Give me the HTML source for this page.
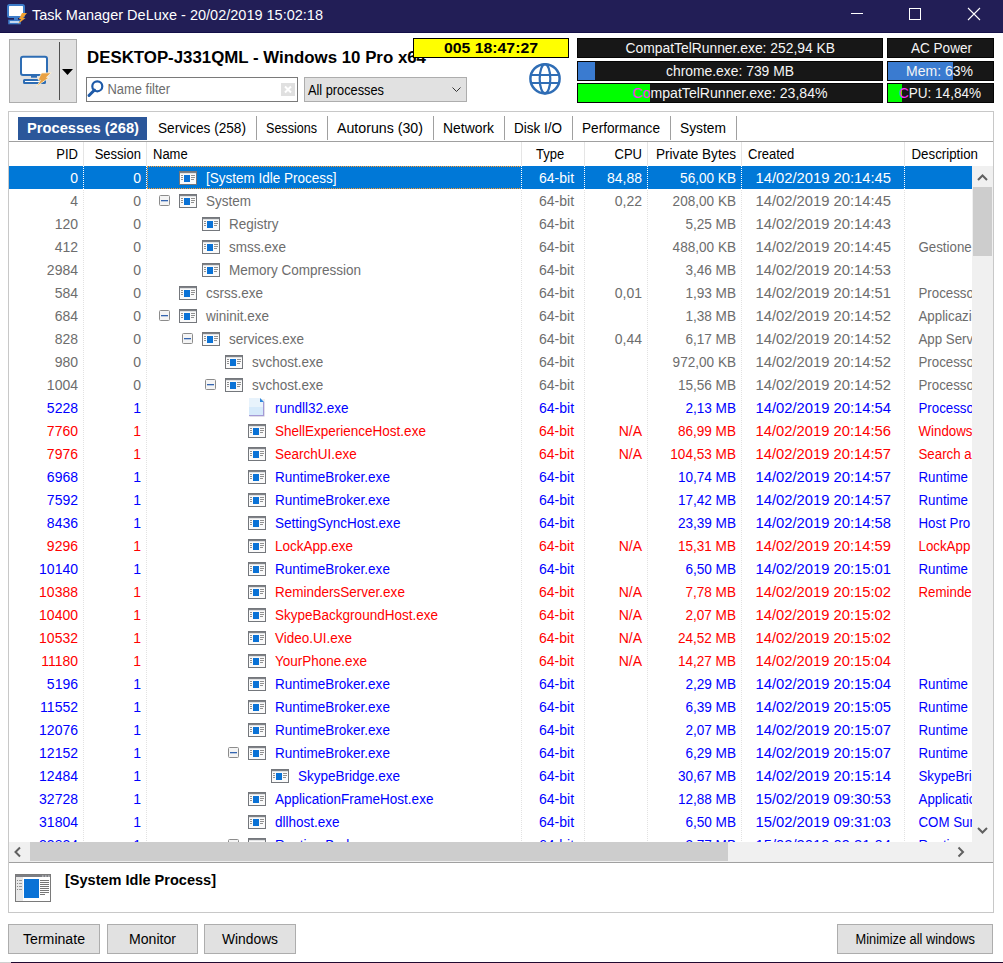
<!DOCTYPE html>
<html><head><meta charset="utf-8"><title>Task Manager DeLuxe</title>
<style>
html,body{margin:0;padding:0;background:#fff;width:1003px;height:963px;overflow:hidden}
svg{display:block}
text{font-family:"Liberation Sans",sans-serif;white-space:pre}
</style></head><body>
<svg width="1003" height="963" viewBox="0 0 1003 963" shape-rendering="auto">
<defs>
<symbol id="wi" viewBox="0 0 18 14">
<rect x="0.5" y="0.5" width="17" height="13" fill="#fafafa" stroke="#74777c"/>
<rect x="1" y="1" width="16" height="1.2" fill="#7f8287"/>
<rect x="5" y="4" width="6" height="7" fill="#0a72d6"/>
<rect x="2" y="4" width="2" height="1" fill="#909090"/><rect x="2" y="6" width="2" height="1" fill="#909090"/><rect x="2" y="8" width="2" height="1" fill="#909090"/>
<rect x="12" y="4" width="4" height="1" fill="#909090"/><rect x="12" y="6" width="4" height="1" fill="#909090"/><rect x="12" y="8" width="3" height="1" fill="#909090"/>
</symbol>
<symbol id="bx" viewBox="0 0 11 11">
<rect x="0.5" y="0.5" width="10" height="10" rx="1" fill="#f4f4f4" stroke="#8c8c8c"/>
<rect x="2" y="5" width="7" height="1.3" fill="#3465b0"/>
</symbol>
<symbol id="doc" viewBox="0 0 16 19">
<rect x="1" y="1" width="15" height="18" fill="#e4e4e4" opacity="0.6"/>
<path d="M0 0 L11 0 L15 4 L15 18 L0 18 Z" fill="#d6eafb"/>
<path d="M0 0 L11 0 L11 4 L15 4 L15 9 L0 9 Z" fill="#e8f3fc"/>
<rect x="14" y="4" width="1.2" height="14" fill="#a49ad6"/>
<rect x="0" y="17" width="15" height="1.2" fill="#a49ad6"/>
<path d="M11 0 L15 4 L11 4 Z" fill="#2f86dc"/>
</symbol>
<pattern id="doh" width="2" height="1" patternUnits="userSpaceOnUse" x="1"><rect width="1" height="1" fill="#ff9a30"/></pattern>
<pattern id="dov" width="1" height="2" patternUnits="userSpaceOnUse" y="1"><rect width="1" height="1" fill="#ff9a30"/></pattern>
<pattern id="dotg" width="1" height="2" patternUnits="userSpaceOnUse"><rect width="1" height="1" fill="#e2e2e2"/></pattern>
<pattern id="dotw" width="1" height="2" patternUnits="userSpaceOnUse"><rect width="1" height="1" fill="#ffffff"/></pattern>
<clipPath id="lc"><rect x="9" y="166" width="963" height="676"/></clipPath>
<clipPath id="dc"><rect x="905" y="166" width="67" height="676"/></clipPath>
</defs>
<rect x="0" y="0" width="1003" height="33" fill="#221e56" />
<rect x="0" y="32" width="1003" height="1" fill="#130f48" />
<g transform="translate(7,4)"><rect x="1" y="1" width="16" height="12" rx="1.5" fill="#fff" stroke="#3d7cc9" stroke-width="2"/><rect x="7" y="14" width="4" height="2" fill="#3d7cc9"/><rect x="2" y="16.5" width="11" height="3" fill="#fff" stroke="#3d7cc9" stroke-width="1.6"/><path d="M15 9 L20 9 L16 14 L18.5 14 L11 20 L14 15 L12 15 Z" fill="#f0a030"/></g>
<text x="32" y="20" font-size="15" fill="#ffffff" text-anchor="start" textLength="291" lengthAdjust="spacingAndGlyphs" style="" >Task Manager DeLuxe - 20/02/2019 15:02:18</text>
<rect x="851" y="13" width="12" height="1" fill="#fff"/>
<rect x="909.5" y="8.5" width="11" height="11" fill="none" stroke="#fff" stroke-width="1"/>
<path d="M968 8 L980 20 M980 8 L968 20" stroke="#fff" stroke-width="1.1"/>
<rect x="9.5" y="39.5" width="67" height="63" fill="#e1e1e1" stroke="#adadad" />
<rect x="59" y="42" width="1" height="58" fill="#505050" />
<path d="M62 69 L73 69 L67.5 75 Z" fill="#000"/>
<g><rect x="21" y="56.8" width="26" height="18.2" rx="2" fill="#fff" stroke="#2e6db4" stroke-width="2"/><rect x="31" y="75.5" width="6" height="2.2" fill="#2e6db4"/><rect x="24" y="80" width="21" height="3" rx="0.5" fill="#fff" stroke="#2e6db4" stroke-width="2"/><path d="M41.5 73 L51.2 72.8 L46.5 77.3 L49.2 77.5 L36.5 86.5 L40.5 80.3 L38 80 Z" fill="#e9a244" stroke="#fffbe8" stroke-width="0.7" stroke-linejoin="round"/></g>
<text x="87" y="63" font-size="16" fill="#000" text-anchor="start" textLength="339" lengthAdjust="spacingAndGlyphs" style="font-weight:bold;" >DESKTOP-J331QML - Windows 10 Pro x64</text>
<rect x="413.5" y="38.5" width="155" height="19" fill="#ffff00" stroke="#000" />
<text x="444" y="53" font-size="14" fill="#000" text-anchor="start" textLength="94" lengthAdjust="spacingAndGlyphs" style="font-weight:bold;" >005 18:47:27</text>
<rect x="86.5" y="77.5" width="211" height="24" fill="#ffffff" stroke="#7a7a7a" />
<circle cx="97.3" cy="86.3" r="5" fill="none" stroke="#1e5aa8" stroke-width="2.2"/>
<path d="M94.5 90 L89 95.5" stroke="#1e5aa8" stroke-width="3" stroke-linecap="round"/>
<text x="107.5" y="93.5" font-size="14" fill="#6d6d6d" text-anchor="start" textLength="62.5" lengthAdjust="spacingAndGlyphs" style="" >Name filter</text>
<rect x="281" y="83" width="14" height="13" fill="#e0e0e0" />
<path d="M285 86.5 L291 92.5 M291 86.5 L285 92.5" stroke="#fff" stroke-width="2"/>
<rect x="304.5" y="77.5" width="162" height="24" fill="#e1e1e1" stroke="#adadad" />
<text x="308" y="95" font-size="14" fill="#000" text-anchor="start" textLength="76" lengthAdjust="spacingAndGlyphs" style="" >All processes</text>
<path d="M452.5 87.5 L456.5 91.5 L460.5 87.5" fill="none" stroke="#333" stroke-width="1"/>
<clipPath id="gc"><circle cx="545" cy="78.8" r="14.6"/></clipPath>
<g fill="none" stroke="#2f6db5" stroke-width="2.5"><circle cx="545" cy="78.8" r="14.6"/><ellipse cx="545" cy="78.8" rx="5.3" ry="14.6" stroke-width="2.2"/><g clip-path="url(#gc)"><path d="M530 75 L560 75 M530 83 L560 83" stroke-width="2"/></g></g>
<rect x="577.5" y="38.5" width="305" height="19" fill="#171717" stroke="#050505" />
<text x="625.5" y="53" font-size="14" fill="#f5f5f5" text-anchor="start" textLength="209.5" lengthAdjust="spacingAndGlyphs" style="" >CompatTelRunner.exe: 252,94 KB</text>
<rect x="577.5" y="61.5" width="305" height="19" fill="#171717" stroke="#050505" />
<rect x="578" y="62" width="17" height="18" fill="#3a7bd0" />
<text x="666" y="76" font-size="14" fill="#f5f5f5" text-anchor="start" textLength="128" lengthAdjust="spacingAndGlyphs" style="" >chrome.exe: 739 MB</text>
<rect x="577.5" y="83.5" width="305" height="19" fill="#171717" stroke="#050505" />
<rect x="578" y="84" width="72" height="18" fill="#00ff00" />
<text x="632.5" y="98" font-size="14" textLength="195" lengthAdjust="spacingAndGlyphs"><tspan fill="#ff30ff">Co</tspan><tspan fill="#f5f5f5">mpatTelRunner.exe: 23,84%</tspan></text>
<rect x="887.5" y="38.5" width="106" height="19" fill="#171717" stroke="#050505" />
<text x="911" y="53" font-size="14" fill="#f5f5f5" text-anchor="start" textLength="61" lengthAdjust="spacingAndGlyphs" style="" >AC Power</text>
<rect x="887.5" y="61.5" width="106" height="19" fill="#171717" stroke="#050505" />
<rect x="888" y="62" width="65" height="18" fill="#3a7bd0" />
<text x="906" y="76" font-size="14" fill="#f5f5f5" text-anchor="start" textLength="67" lengthAdjust="spacingAndGlyphs" style="" >Mem: 63%</text>
<rect x="887.5" y="83.5" width="106" height="19" fill="#171717" stroke="#050505" />
<rect x="888" y="84" width="14" height="18" fill="#00ff00" />
<text x="899" y="98" font-size="14" textLength="82" lengthAdjust="spacingAndGlyphs"><tspan fill="#ff30ff">C</tspan><tspan fill="#f5f5f5">PU: 14,84%</tspan></text>
<rect x="8.5" y="111.5" width="985" height="801" fill="#ffffff" stroke="#c8c8c8" />
<rect x="9" y="141" width="984" height="1" fill="#a0a0a0" />
<rect x="18" y="117" width="129" height="23" fill="#2b579a" />
<text x="27" y="133" font-size="14" fill="#ffffff" text-anchor="start" textLength="112" lengthAdjust="spacingAndGlyphs" style="font-weight:bold;" >Processes (268)</text>
<text x="158" y="133" font-size="14" fill="#000" text-anchor="start" textLength="88" lengthAdjust="spacingAndGlyphs" style="" >Services (258)</text>
<rect x="256" y="116" width="1" height="24" fill="#a0a0a0" />
<text x="266" y="133" font-size="14" fill="#000" text-anchor="start" textLength="51" lengthAdjust="spacingAndGlyphs" style="" >Sessions</text>
<rect x="327" y="116" width="1" height="24" fill="#a0a0a0" />
<text x="337" y="133" font-size="14" fill="#000" text-anchor="start" textLength="86" lengthAdjust="spacingAndGlyphs" style="" >Autoruns (30)</text>
<rect x="433" y="116" width="1" height="24" fill="#a0a0a0" />
<text x="443" y="133" font-size="14" fill="#000" text-anchor="start" textLength="51" lengthAdjust="spacingAndGlyphs" style="" >Network</text>
<rect x="504" y="116" width="1" height="24" fill="#a0a0a0" />
<text x="514" y="133" font-size="14" fill="#000" text-anchor="start" textLength="48" lengthAdjust="spacingAndGlyphs" style="" >Disk I/O</text>
<rect x="572" y="116" width="1" height="24" fill="#a0a0a0" />
<text x="582" y="133" font-size="14" fill="#000" text-anchor="start" textLength="78" lengthAdjust="spacingAndGlyphs" style="" >Performance</text>
<rect x="670" y="116" width="1" height="24" fill="#a0a0a0" />
<text x="680" y="133" font-size="14" fill="#000" text-anchor="start" textLength="46" lengthAdjust="spacingAndGlyphs" style="" >System</text>
<rect x="736" y="116" width="1" height="24" fill="#a0a0a0" />
<rect x="9" y="142" width="964" height="24" fill="#ffffff" />
<rect x="83" y="142" width="1" height="24" fill="#e5e5e5" />
<rect x="146" y="142" width="1" height="24" fill="#e5e5e5" />
<rect x="521" y="142" width="1" height="24" fill="#e5e5e5" />
<rect x="584" y="142" width="1" height="24" fill="#e5e5e5" />
<rect x="647" y="142" width="1" height="24" fill="#e5e5e5" />
<rect x="741" y="142" width="1" height="24" fill="#e5e5e5" />
<rect x="904" y="142" width="1" height="24" fill="#e5e5e5" />
<text x="78" y="159" font-size="14" fill="#000" text-anchor="end" textLength="21.7" lengthAdjust="spacingAndGlyphs" style="" >PID</text>
<text x="141" y="159" font-size="14" fill="#000" text-anchor="end" textLength="46.3" lengthAdjust="spacingAndGlyphs" style="" >Session</text>
<text x="153" y="159" font-size="14" fill="#000" text-anchor="start" textLength="34.7" lengthAdjust="spacingAndGlyphs" style="" >Name</text>
<text x="536" y="159" font-size="14" fill="#000" text-anchor="start" textLength="28.2" lengthAdjust="spacingAndGlyphs" style="" >Type</text>
<text x="642" y="159" font-size="14" fill="#000" text-anchor="end" textLength="27.5" lengthAdjust="spacingAndGlyphs" style="" >CPU</text>
<text x="736" y="159" font-size="14" fill="#000" text-anchor="end" textLength="80" lengthAdjust="spacingAndGlyphs" style="" >Private Bytes</text>
<text x="748" y="159" font-size="14" fill="#000" text-anchor="start" textLength="46.3" lengthAdjust="spacingAndGlyphs" style="" >Created</text>
<text x="911.5" y="159" font-size="14" fill="#000" text-anchor="start" textLength="66.5" lengthAdjust="spacingAndGlyphs" style="" >Description</text>
<g clip-path="url(#lc)">
<rect x="83" y="166" width="1" height="676" fill="url(#dotg)"/>
<rect x="146" y="166" width="1" height="676" fill="url(#dotg)"/>
<rect x="521" y="166" width="1" height="676" fill="url(#dotg)"/>
<rect x="584" y="166" width="1" height="676" fill="url(#dotg)"/>
<rect x="647" y="166" width="1" height="676" fill="url(#dotg)"/>
<rect x="741" y="166" width="1" height="676" fill="url(#dotg)"/>
<rect x="904" y="166" width="1" height="676" fill="url(#dotg)"/>
<rect x="9" y="166" width="963" height="23" fill="#0078d7" />
<rect x="83" y="166" width="1" height="23" fill="url(#dotw)"/>
<rect x="146" y="166" width="1" height="23" fill="url(#dotw)"/>
<rect x="521" y="166" width="1" height="23" fill="url(#dotw)"/>
<rect x="584" y="166" width="1" height="23" fill="url(#dotw)"/>
<rect x="647" y="166" width="1" height="23" fill="url(#dotw)"/>
<rect x="741" y="166" width="1" height="23" fill="url(#dotw)"/>
<rect x="904" y="166" width="1" height="23" fill="url(#dotw)"/>
<rect x="147" y="166" width="374" height="1" fill="url(#doh)"/><rect x="147" y="188" width="374" height="1" fill="url(#doh)"/><rect x="147" y="166" width="1" height="23" fill="url(#dov)"/>
<text x="78" y="183" font-size="14" fill="#ffffff" text-anchor="end" style="" >0</text>
<text x="141" y="183" font-size="14" fill="#ffffff" text-anchor="end" style="" >0</text>
<use href="#wi" x="179" y="171" width="18" height="14"/>
<text x="206" y="183" font-size="14" fill="#ffffff" text-anchor="start" textLength="130.6" lengthAdjust="spacingAndGlyphs" style="" >[System Idle Process]</text>
<text x="539" y="183" font-size="14" fill="#ffffff" text-anchor="start" style="" >64-bit</text>
<text x="642" y="183" font-size="14" fill="#ffffff" text-anchor="end" style="" >84,88</text>
<text x="736" y="183" font-size="14" fill="#ffffff" text-anchor="end" textLength="55.9" lengthAdjust="spacingAndGlyphs" style="" >56,00 KB</text>
<text x="755.5" y="183" font-size="14" fill="#ffffff" text-anchor="start" textLength="135.5" lengthAdjust="spacingAndGlyphs" style="" >14/02/2019 20:14:45</text>
<text x="78" y="206" font-size="14" fill="#6d6d6d" text-anchor="end" style="" >4</text>
<text x="141" y="206" font-size="14" fill="#6d6d6d" text-anchor="end" style="" >0</text>
<use href="#bx" x="159" y="195" width="11" height="11"/>
<use href="#wi" x="179" y="194" width="18" height="14"/>
<text x="206" y="206" font-size="14" fill="#6d6d6d" text-anchor="start" textLength="45.0" lengthAdjust="spacingAndGlyphs" style="" >System</text>
<text x="539" y="206" font-size="14" fill="#6d6d6d" text-anchor="start" style="" >64-bit</text>
<text x="642" y="206" font-size="14" fill="#6d6d6d" text-anchor="end" style="" >0,22</text>
<text x="736" y="206" font-size="14" fill="#6d6d6d" text-anchor="end" textLength="63.4" lengthAdjust="spacingAndGlyphs" style="" >208,00 KB</text>
<text x="755.5" y="206" font-size="14" fill="#6d6d6d" text-anchor="start" textLength="135.5" lengthAdjust="spacingAndGlyphs" style="" >14/02/2019 20:14:45</text>
<text x="78" y="229" font-size="14" fill="#6d6d6d" text-anchor="end" style="" >120</text>
<text x="141" y="229" font-size="14" fill="#6d6d6d" text-anchor="end" style="" >0</text>
<use href="#wi" x="202" y="217" width="18" height="14"/>
<text x="229" y="229" font-size="14" fill="#6d6d6d" text-anchor="start" textLength="49.5" lengthAdjust="spacingAndGlyphs" style="" >Registry</text>
<text x="539" y="229" font-size="14" fill="#6d6d6d" text-anchor="start" style="" >64-bit</text>
<text x="736" y="229" font-size="14" fill="#6d6d6d" text-anchor="end" textLength="50.6" lengthAdjust="spacingAndGlyphs" style="" >5,25 MB</text>
<text x="755.5" y="229" font-size="14" fill="#6d6d6d" text-anchor="start" textLength="135.5" lengthAdjust="spacingAndGlyphs" style="" >14/02/2019 20:14:43</text>
<text x="78" y="252" font-size="14" fill="#6d6d6d" text-anchor="end" style="" >412</text>
<text x="141" y="252" font-size="14" fill="#6d6d6d" text-anchor="end" style="" >0</text>
<use href="#wi" x="202" y="240" width="18" height="14"/>
<text x="229" y="252" font-size="14" fill="#6d6d6d" text-anchor="start" textLength="57.1" lengthAdjust="spacingAndGlyphs" style="" >smss.exe</text>
<text x="539" y="252" font-size="14" fill="#6d6d6d" text-anchor="start" style="" >64-bit</text>
<text x="736" y="252" font-size="14" fill="#6d6d6d" text-anchor="end" textLength="63.4" lengthAdjust="spacingAndGlyphs" style="" >488,00 KB</text>
<text x="755.5" y="252" font-size="14" fill="#6d6d6d" text-anchor="start" textLength="135.5" lengthAdjust="spacingAndGlyphs" style="" >14/02/2019 20:14:45</text>
<g clip-path="url(#dc)">
<text x="918.5" y="252" font-size="14" fill="#6d6d6d" text-anchor="start" textLength="53.2" lengthAdjust="spacingAndGlyphs" style="" >Gestione</text>
</g>
<text x="78" y="275" font-size="14" fill="#6d6d6d" text-anchor="end" style="" >2984</text>
<text x="141" y="275" font-size="14" fill="#6d6d6d" text-anchor="end" style="" >0</text>
<use href="#wi" x="202" y="263" width="18" height="14"/>
<text x="229" y="275" font-size="14" fill="#6d6d6d" text-anchor="start" textLength="132.1" lengthAdjust="spacingAndGlyphs" style="" >Memory Compression</text>
<text x="539" y="275" font-size="14" fill="#6d6d6d" text-anchor="start" style="" >64-bit</text>
<text x="736" y="275" font-size="14" fill="#6d6d6d" text-anchor="end" textLength="50.6" lengthAdjust="spacingAndGlyphs" style="" >3,46 MB</text>
<text x="755.5" y="275" font-size="14" fill="#6d6d6d" text-anchor="start" textLength="135.5" lengthAdjust="spacingAndGlyphs" style="" >14/02/2019 20:14:53</text>
<text x="78" y="298" font-size="14" fill="#6d6d6d" text-anchor="end" style="" >584</text>
<text x="141" y="298" font-size="14" fill="#6d6d6d" text-anchor="end" style="" >0</text>
<use href="#wi" x="179" y="286" width="18" height="14"/>
<text x="206" y="298" font-size="14" fill="#6d6d6d" text-anchor="start" textLength="57.1" lengthAdjust="spacingAndGlyphs" style="" >csrss.exe</text>
<text x="539" y="298" font-size="14" fill="#6d6d6d" text-anchor="start" style="" >64-bit</text>
<text x="642" y="298" font-size="14" fill="#6d6d6d" text-anchor="end" style="" >0,01</text>
<text x="736" y="298" font-size="14" fill="#6d6d6d" text-anchor="end" textLength="50.6" lengthAdjust="spacingAndGlyphs" style="" >1,93 MB</text>
<text x="755.5" y="298" font-size="14" fill="#6d6d6d" text-anchor="start" textLength="135.5" lengthAdjust="spacingAndGlyphs" style="" >14/02/2019 20:14:51</text>
<g clip-path="url(#dc)">
<text x="918.5" y="298" font-size="14" fill="#6d6d6d" text-anchor="start" textLength="55.4" lengthAdjust="spacingAndGlyphs" style="" >Processo</text>
</g>
<text x="78" y="321" font-size="14" fill="#6d6d6d" text-anchor="end" style="" >684</text>
<text x="141" y="321" font-size="14" fill="#6d6d6d" text-anchor="end" style="" >0</text>
<use href="#bx" x="159" y="310" width="11" height="11"/>
<use href="#wi" x="179" y="309" width="18" height="14"/>
<text x="206" y="321" font-size="14" fill="#6d6d6d" text-anchor="start" textLength="63.1" lengthAdjust="spacingAndGlyphs" style="" >wininit.exe</text>
<text x="539" y="321" font-size="14" fill="#6d6d6d" text-anchor="start" style="" >64-bit</text>
<text x="736" y="321" font-size="14" fill="#6d6d6d" text-anchor="end" textLength="50.6" lengthAdjust="spacingAndGlyphs" style="" >1,38 MB</text>
<text x="755.5" y="321" font-size="14" fill="#6d6d6d" text-anchor="start" textLength="135.5" lengthAdjust="spacingAndGlyphs" style="" >14/02/2019 20:14:52</text>
<g clip-path="url(#dc)">
<text x="918.5" y="321" font-size="14" fill="#6d6d6d" text-anchor="start" textLength="60.6" lengthAdjust="spacingAndGlyphs" style="" >Applicazio</text>
</g>
<text x="78" y="344" font-size="14" fill="#6d6d6d" text-anchor="end" style="" >828</text>
<text x="141" y="344" font-size="14" fill="#6d6d6d" text-anchor="end" style="" >0</text>
<use href="#bx" x="182" y="333" width="11" height="11"/>
<use href="#wi" x="202" y="332" width="18" height="14"/>
<text x="229" y="344" font-size="14" fill="#6d6d6d" text-anchor="start" textLength="75.1" lengthAdjust="spacingAndGlyphs" style="" >services.exe</text>
<text x="539" y="344" font-size="14" fill="#6d6d6d" text-anchor="start" style="" >64-bit</text>
<text x="642" y="344" font-size="14" fill="#6d6d6d" text-anchor="end" style="" >0,44</text>
<text x="736" y="344" font-size="14" fill="#6d6d6d" text-anchor="end" textLength="50.6" lengthAdjust="spacingAndGlyphs" style="" >6,17 MB</text>
<text x="755.5" y="344" font-size="14" fill="#6d6d6d" text-anchor="start" textLength="135.5" lengthAdjust="spacingAndGlyphs" style="" >14/02/2019 20:14:52</text>
<g clip-path="url(#dc)">
<text x="918.5" y="344" font-size="14" fill="#6d6d6d" text-anchor="start" textLength="54.7" lengthAdjust="spacingAndGlyphs" style="" >App Serv</text>
</g>
<text x="78" y="367" font-size="14" fill="#6d6d6d" text-anchor="end" style="" >980</text>
<text x="141" y="367" font-size="14" fill="#6d6d6d" text-anchor="end" style="" >0</text>
<use href="#wi" x="225" y="355" width="18" height="14"/>
<text x="252" y="367" font-size="14" fill="#6d6d6d" text-anchor="start" textLength="71.3" lengthAdjust="spacingAndGlyphs" style="" >svchost.exe</text>
<text x="539" y="367" font-size="14" fill="#6d6d6d" text-anchor="start" style="" >64-bit</text>
<text x="736" y="367" font-size="14" fill="#6d6d6d" text-anchor="end" textLength="63.4" lengthAdjust="spacingAndGlyphs" style="" >972,00 KB</text>
<text x="755.5" y="367" font-size="14" fill="#6d6d6d" text-anchor="start" textLength="135.5" lengthAdjust="spacingAndGlyphs" style="" >14/02/2019 20:14:52</text>
<g clip-path="url(#dc)">
<text x="918.5" y="367" font-size="14" fill="#6d6d6d" text-anchor="start" textLength="55.4" lengthAdjust="spacingAndGlyphs" style="" >Processo</text>
</g>
<text x="78" y="390" font-size="14" fill="#6d6d6d" text-anchor="end" style="" >1004</text>
<text x="141" y="390" font-size="14" fill="#6d6d6d" text-anchor="end" style="" >0</text>
<use href="#bx" x="205" y="379" width="11" height="11"/>
<use href="#wi" x="225" y="378" width="18" height="14"/>
<text x="252" y="390" font-size="14" fill="#6d6d6d" text-anchor="start" textLength="71.3" lengthAdjust="spacingAndGlyphs" style="" >svchost.exe</text>
<text x="539" y="390" font-size="14" fill="#6d6d6d" text-anchor="start" style="" >64-bit</text>
<text x="736" y="390" font-size="14" fill="#6d6d6d" text-anchor="end" textLength="58.1" lengthAdjust="spacingAndGlyphs" style="" >15,56 MB</text>
<text x="755.5" y="390" font-size="14" fill="#6d6d6d" text-anchor="start" textLength="135.5" lengthAdjust="spacingAndGlyphs" style="" >14/02/2019 20:14:52</text>
<g clip-path="url(#dc)">
<text x="918.5" y="390" font-size="14" fill="#6d6d6d" text-anchor="start" textLength="55.4" lengthAdjust="spacingAndGlyphs" style="" >Processo</text>
</g>
<text x="78" y="413" font-size="14" fill="#0000ff" text-anchor="end" style="" >5228</text>
<text x="141" y="413" font-size="14" fill="#0000ff" text-anchor="end" style="" >1</text>
<use href="#doc" x="249" y="398" width="16" height="19"/>
<text x="275" y="413" font-size="14" fill="#0000ff" text-anchor="start" textLength="73.6" lengthAdjust="spacingAndGlyphs" style="" >rundll32.exe</text>
<text x="539" y="413" font-size="14" fill="#0000ff" text-anchor="start" style="" >64-bit</text>
<text x="736" y="413" font-size="14" fill="#0000ff" text-anchor="end" textLength="50.6" lengthAdjust="spacingAndGlyphs" style="" >2,13 MB</text>
<text x="755.5" y="413" font-size="14" fill="#0000ff" text-anchor="start" textLength="135.5" lengthAdjust="spacingAndGlyphs" style="" >14/02/2019 20:14:54</text>
<g clip-path="url(#dc)">
<text x="918.5" y="413" font-size="14" fill="#0000ff" text-anchor="start" textLength="55.4" lengthAdjust="spacingAndGlyphs" style="" >Processo</text>
</g>
<text x="78" y="436" font-size="14" fill="#ff0000" text-anchor="end" style="" >7760</text>
<text x="141" y="436" font-size="14" fill="#ff0000" text-anchor="end" style="" >1</text>
<use href="#wi" x="248" y="424" width="18" height="14"/>
<text x="275" y="436" font-size="14" fill="#ff0000" text-anchor="start" textLength="150.9" lengthAdjust="spacingAndGlyphs" style="" >ShellExperienceHost.exe</text>
<text x="539" y="436" font-size="14" fill="#ff0000" text-anchor="start" style="" >64-bit</text>
<text x="642" y="436" font-size="14" fill="#ff0000" text-anchor="end" style="" >N/A</text>
<text x="736" y="436" font-size="14" fill="#ff0000" text-anchor="end" textLength="58.1" lengthAdjust="spacingAndGlyphs" style="" >86,99 MB</text>
<text x="755.5" y="436" font-size="14" fill="#ff0000" text-anchor="start" textLength="135.5" lengthAdjust="spacingAndGlyphs" style="" >14/02/2019 20:14:56</text>
<g clip-path="url(#dc)">
<text x="918.5" y="436" font-size="14" fill="#ff0000" text-anchor="start" textLength="54.0" lengthAdjust="spacingAndGlyphs" style="" >Windows</text>
</g>
<text x="78" y="459" font-size="14" fill="#ff0000" text-anchor="end" style="" >7976</text>
<text x="141" y="459" font-size="14" fill="#ff0000" text-anchor="end" style="" >1</text>
<use href="#wi" x="248" y="447" width="18" height="14"/>
<text x="275" y="459" font-size="14" fill="#ff0000" text-anchor="start" textLength="81.8" lengthAdjust="spacingAndGlyphs" style="" >SearchUI.exe</text>
<text x="539" y="459" font-size="14" fill="#ff0000" text-anchor="start" style="" >64-bit</text>
<text x="642" y="459" font-size="14" fill="#ff0000" text-anchor="end" style="" >N/A</text>
<text x="736" y="459" font-size="14" fill="#ff0000" text-anchor="end" textLength="65.7" lengthAdjust="spacingAndGlyphs" style="" >104,53 MB</text>
<text x="755.5" y="459" font-size="14" fill="#ff0000" text-anchor="start" textLength="135.5" lengthAdjust="spacingAndGlyphs" style="" >14/02/2019 20:14:57</text>
<g clip-path="url(#dc)">
<text x="918.5" y="459" font-size="14" fill="#ff0000" text-anchor="start" textLength="53.2" lengthAdjust="spacingAndGlyphs" style="" >Search a</text>
</g>
<text x="78" y="482" font-size="14" fill="#0000ff" text-anchor="end" style="" >6968</text>
<text x="141" y="482" font-size="14" fill="#0000ff" text-anchor="end" style="" >1</text>
<use href="#wi" x="248" y="470" width="18" height="14"/>
<text x="275" y="482" font-size="14" fill="#0000ff" text-anchor="start" textLength="114.9" lengthAdjust="spacingAndGlyphs" style="" >RuntimeBroker.exe</text>
<text x="539" y="482" font-size="14" fill="#0000ff" text-anchor="start" style="" >64-bit</text>
<text x="736" y="482" font-size="14" fill="#0000ff" text-anchor="end" textLength="58.1" lengthAdjust="spacingAndGlyphs" style="" >10,74 MB</text>
<text x="755.5" y="482" font-size="14" fill="#0000ff" text-anchor="start" textLength="135.5" lengthAdjust="spacingAndGlyphs" style="" >14/02/2019 20:14:57</text>
<g clip-path="url(#dc)">
<text x="918.5" y="482" font-size="14" fill="#0000ff" text-anchor="start" textLength="49.5" lengthAdjust="spacingAndGlyphs" style="" >Runtime</text>
</g>
<text x="78" y="505" font-size="14" fill="#0000ff" text-anchor="end" style="" >7592</text>
<text x="141" y="505" font-size="14" fill="#0000ff" text-anchor="end" style="" >1</text>
<use href="#wi" x="248" y="493" width="18" height="14"/>
<text x="275" y="505" font-size="14" fill="#0000ff" text-anchor="start" textLength="114.9" lengthAdjust="spacingAndGlyphs" style="" >RuntimeBroker.exe</text>
<text x="539" y="505" font-size="14" fill="#0000ff" text-anchor="start" style="" >64-bit</text>
<text x="736" y="505" font-size="14" fill="#0000ff" text-anchor="end" textLength="58.1" lengthAdjust="spacingAndGlyphs" style="" >17,42 MB</text>
<text x="755.5" y="505" font-size="14" fill="#0000ff" text-anchor="start" textLength="135.5" lengthAdjust="spacingAndGlyphs" style="" >14/02/2019 20:14:57</text>
<g clip-path="url(#dc)">
<text x="918.5" y="505" font-size="14" fill="#0000ff" text-anchor="start" textLength="49.5" lengthAdjust="spacingAndGlyphs" style="" >Runtime</text>
</g>
<text x="78" y="528" font-size="14" fill="#0000ff" text-anchor="end" style="" >8436</text>
<text x="141" y="528" font-size="14" fill="#0000ff" text-anchor="end" style="" >1</text>
<use href="#wi" x="248" y="516" width="18" height="14"/>
<text x="275" y="528" font-size="14" fill="#0000ff" text-anchor="start" textLength="125.4" lengthAdjust="spacingAndGlyphs" style="" >SettingSyncHost.exe</text>
<text x="539" y="528" font-size="14" fill="#0000ff" text-anchor="start" style="" >64-bit</text>
<text x="736" y="528" font-size="14" fill="#0000ff" text-anchor="end" textLength="58.1" lengthAdjust="spacingAndGlyphs" style="" >23,39 MB</text>
<text x="755.5" y="528" font-size="14" fill="#0000ff" text-anchor="start" textLength="135.5" lengthAdjust="spacingAndGlyphs" style="" >14/02/2019 20:14:58</text>
<g clip-path="url(#dc)">
<text x="918.5" y="528" font-size="14" fill="#0000ff" text-anchor="start" textLength="51.7" lengthAdjust="spacingAndGlyphs" style="" >Host Pro</text>
</g>
<text x="78" y="551" font-size="14" fill="#ff0000" text-anchor="end" style="" >9296</text>
<text x="141" y="551" font-size="14" fill="#ff0000" text-anchor="end" style="" >1</text>
<use href="#wi" x="248" y="539" width="18" height="14"/>
<text x="275" y="551" font-size="14" fill="#ff0000" text-anchor="start" textLength="78.1" lengthAdjust="spacingAndGlyphs" style="" >LockApp.exe</text>
<text x="539" y="551" font-size="14" fill="#ff0000" text-anchor="start" style="" >64-bit</text>
<text x="642" y="551" font-size="14" fill="#ff0000" text-anchor="end" style="" >N/A</text>
<text x="736" y="551" font-size="14" fill="#ff0000" text-anchor="end" textLength="58.1" lengthAdjust="spacingAndGlyphs" style="" >15,31 MB</text>
<text x="755.5" y="551" font-size="14" fill="#ff0000" text-anchor="start" textLength="135.5" lengthAdjust="spacingAndGlyphs" style="" >14/02/2019 20:14:59</text>
<g clip-path="url(#dc)">
<text x="918.5" y="551" font-size="14" fill="#ff0000" text-anchor="start" textLength="51.8" lengthAdjust="spacingAndGlyphs" style="" >LockApp</text>
</g>
<text x="78" y="574" font-size="14" fill="#0000ff" text-anchor="end" style="" >10140</text>
<text x="141" y="574" font-size="14" fill="#0000ff" text-anchor="end" style="" >1</text>
<use href="#wi" x="248" y="562" width="18" height="14"/>
<text x="275" y="574" font-size="14" fill="#0000ff" text-anchor="start" textLength="114.9" lengthAdjust="spacingAndGlyphs" style="" >RuntimeBroker.exe</text>
<text x="539" y="574" font-size="14" fill="#0000ff" text-anchor="start" style="" >64-bit</text>
<text x="736" y="574" font-size="14" fill="#0000ff" text-anchor="end" textLength="50.6" lengthAdjust="spacingAndGlyphs" style="" >6,50 MB</text>
<text x="755.5" y="574" font-size="14" fill="#0000ff" text-anchor="start" textLength="135.5" lengthAdjust="spacingAndGlyphs" style="" >14/02/2019 20:15:01</text>
<g clip-path="url(#dc)">
<text x="918.5" y="574" font-size="14" fill="#0000ff" text-anchor="start" textLength="49.5" lengthAdjust="spacingAndGlyphs" style="" >Runtime</text>
</g>
<text x="78" y="597" font-size="14" fill="#ff0000" text-anchor="end" style="" >10388</text>
<text x="141" y="597" font-size="14" fill="#ff0000" text-anchor="end" style="" >1</text>
<use href="#wi" x="248" y="585" width="18" height="14"/>
<text x="275" y="597" font-size="14" fill="#ff0000" text-anchor="start" textLength="129.9" lengthAdjust="spacingAndGlyphs" style="" >RemindersServer.exe</text>
<text x="539" y="597" font-size="14" fill="#ff0000" text-anchor="start" style="" >64-bit</text>
<text x="642" y="597" font-size="14" fill="#ff0000" text-anchor="end" style="" >N/A</text>
<text x="736" y="597" font-size="14" fill="#ff0000" text-anchor="end" textLength="50.6" lengthAdjust="spacingAndGlyphs" style="" >7,78 MB</text>
<text x="755.5" y="597" font-size="14" fill="#ff0000" text-anchor="start" textLength="135.5" lengthAdjust="spacingAndGlyphs" style="" >14/02/2019 20:15:02</text>
<g clip-path="url(#dc)">
<text x="918.5" y="597" font-size="14" fill="#ff0000" text-anchor="start" textLength="53.2" lengthAdjust="spacingAndGlyphs" style="" >Reminde</text>
</g>
<text x="78" y="620" font-size="14" fill="#ff0000" text-anchor="end" style="" >10400</text>
<text x="141" y="620" font-size="14" fill="#ff0000" text-anchor="end" style="" >1</text>
<use href="#wi" x="248" y="608" width="18" height="14"/>
<text x="275" y="620" font-size="14" fill="#ff0000" text-anchor="start" textLength="163.0" lengthAdjust="spacingAndGlyphs" style="" >SkypeBackgroundHost.exe</text>
<text x="539" y="620" font-size="14" fill="#ff0000" text-anchor="start" style="" >64-bit</text>
<text x="642" y="620" font-size="14" fill="#ff0000" text-anchor="end" style="" >N/A</text>
<text x="736" y="620" font-size="14" fill="#ff0000" text-anchor="end" textLength="50.6" lengthAdjust="spacingAndGlyphs" style="" >2,07 MB</text>
<text x="755.5" y="620" font-size="14" fill="#ff0000" text-anchor="start" textLength="135.5" lengthAdjust="spacingAndGlyphs" style="" >14/02/2019 20:15:02</text>
<text x="78" y="643" font-size="14" fill="#ff0000" text-anchor="end" style="" >10532</text>
<text x="141" y="643" font-size="14" fill="#ff0000" text-anchor="end" style="" >1</text>
<use href="#wi" x="248" y="631" width="18" height="14"/>
<text x="275" y="643" font-size="14" fill="#ff0000" text-anchor="start" textLength="77.1" lengthAdjust="spacingAndGlyphs" style="" >Video.UI.exe</text>
<text x="539" y="643" font-size="14" fill="#ff0000" text-anchor="start" style="" >64-bit</text>
<text x="642" y="643" font-size="14" fill="#ff0000" text-anchor="end" style="" >N/A</text>
<text x="736" y="643" font-size="14" fill="#ff0000" text-anchor="end" textLength="58.1" lengthAdjust="spacingAndGlyphs" style="" >24,52 MB</text>
<text x="755.5" y="643" font-size="14" fill="#ff0000" text-anchor="start" textLength="135.5" lengthAdjust="spacingAndGlyphs" style="" >14/02/2019 20:15:02</text>
<text x="78" y="666" font-size="14" fill="#ff0000" text-anchor="end" style="" >11180</text>
<text x="141" y="666" font-size="14" fill="#ff0000" text-anchor="end" style="" >1</text>
<use href="#wi" x="248" y="654" width="18" height="14"/>
<text x="275" y="666" font-size="14" fill="#ff0000" text-anchor="start" textLength="91.9" lengthAdjust="spacingAndGlyphs" style="" >YourPhone.exe</text>
<text x="539" y="666" font-size="14" fill="#ff0000" text-anchor="start" style="" >64-bit</text>
<text x="642" y="666" font-size="14" fill="#ff0000" text-anchor="end" style="" >N/A</text>
<text x="736" y="666" font-size="14" fill="#ff0000" text-anchor="end" textLength="58.1" lengthAdjust="spacingAndGlyphs" style="" >14,27 MB</text>
<text x="755.5" y="666" font-size="14" fill="#ff0000" text-anchor="start" textLength="135.5" lengthAdjust="spacingAndGlyphs" style="" >14/02/2019 20:15:04</text>
<text x="78" y="689" font-size="14" fill="#0000ff" text-anchor="end" style="" >5196</text>
<text x="141" y="689" font-size="14" fill="#0000ff" text-anchor="end" style="" >1</text>
<use href="#wi" x="248" y="677" width="18" height="14"/>
<text x="275" y="689" font-size="14" fill="#0000ff" text-anchor="start" textLength="114.9" lengthAdjust="spacingAndGlyphs" style="" >RuntimeBroker.exe</text>
<text x="539" y="689" font-size="14" fill="#0000ff" text-anchor="start" style="" >64-bit</text>
<text x="736" y="689" font-size="14" fill="#0000ff" text-anchor="end" textLength="50.6" lengthAdjust="spacingAndGlyphs" style="" >2,29 MB</text>
<text x="755.5" y="689" font-size="14" fill="#0000ff" text-anchor="start" textLength="135.5" lengthAdjust="spacingAndGlyphs" style="" >14/02/2019 20:15:04</text>
<g clip-path="url(#dc)">
<text x="918.5" y="689" font-size="14" fill="#0000ff" text-anchor="start" textLength="49.5" lengthAdjust="spacingAndGlyphs" style="" >Runtime</text>
</g>
<text x="78" y="712" font-size="14" fill="#0000ff" text-anchor="end" style="" >11552</text>
<text x="141" y="712" font-size="14" fill="#0000ff" text-anchor="end" style="" >1</text>
<use href="#wi" x="248" y="700" width="18" height="14"/>
<text x="275" y="712" font-size="14" fill="#0000ff" text-anchor="start" textLength="114.9" lengthAdjust="spacingAndGlyphs" style="" >RuntimeBroker.exe</text>
<text x="539" y="712" font-size="14" fill="#0000ff" text-anchor="start" style="" >64-bit</text>
<text x="736" y="712" font-size="14" fill="#0000ff" text-anchor="end" textLength="50.6" lengthAdjust="spacingAndGlyphs" style="" >6,39 MB</text>
<text x="755.5" y="712" font-size="14" fill="#0000ff" text-anchor="start" textLength="135.5" lengthAdjust="spacingAndGlyphs" style="" >14/02/2019 20:15:05</text>
<g clip-path="url(#dc)">
<text x="918.5" y="712" font-size="14" fill="#0000ff" text-anchor="start" textLength="49.5" lengthAdjust="spacingAndGlyphs" style="" >Runtime</text>
</g>
<text x="78" y="735" font-size="14" fill="#0000ff" text-anchor="end" style="" >12076</text>
<text x="141" y="735" font-size="14" fill="#0000ff" text-anchor="end" style="" >1</text>
<use href="#wi" x="248" y="723" width="18" height="14"/>
<text x="275" y="735" font-size="14" fill="#0000ff" text-anchor="start" textLength="114.9" lengthAdjust="spacingAndGlyphs" style="" >RuntimeBroker.exe</text>
<text x="539" y="735" font-size="14" fill="#0000ff" text-anchor="start" style="" >64-bit</text>
<text x="736" y="735" font-size="14" fill="#0000ff" text-anchor="end" textLength="50.6" lengthAdjust="spacingAndGlyphs" style="" >2,07 MB</text>
<text x="755.5" y="735" font-size="14" fill="#0000ff" text-anchor="start" textLength="135.5" lengthAdjust="spacingAndGlyphs" style="" >14/02/2019 20:15:07</text>
<g clip-path="url(#dc)">
<text x="918.5" y="735" font-size="14" fill="#0000ff" text-anchor="start" textLength="49.5" lengthAdjust="spacingAndGlyphs" style="" >Runtime</text>
</g>
<text x="78" y="758" font-size="14" fill="#0000ff" text-anchor="end" style="" >12152</text>
<text x="141" y="758" font-size="14" fill="#0000ff" text-anchor="end" style="" >1</text>
<use href="#bx" x="228" y="747" width="11" height="11"/>
<use href="#wi" x="248" y="746" width="18" height="14"/>
<text x="275" y="758" font-size="14" fill="#0000ff" text-anchor="start" textLength="114.9" lengthAdjust="spacingAndGlyphs" style="" >RuntimeBroker.exe</text>
<text x="539" y="758" font-size="14" fill="#0000ff" text-anchor="start" style="" >64-bit</text>
<text x="736" y="758" font-size="14" fill="#0000ff" text-anchor="end" textLength="50.6" lengthAdjust="spacingAndGlyphs" style="" >6,29 MB</text>
<text x="755.5" y="758" font-size="14" fill="#0000ff" text-anchor="start" textLength="135.5" lengthAdjust="spacingAndGlyphs" style="" >14/02/2019 20:15:07</text>
<g clip-path="url(#dc)">
<text x="918.5" y="758" font-size="14" fill="#0000ff" text-anchor="start" textLength="49.5" lengthAdjust="spacingAndGlyphs" style="" >Runtime</text>
</g>
<text x="78" y="781" font-size="14" fill="#0000ff" text-anchor="end" style="" >12484</text>
<text x="141" y="781" font-size="14" fill="#0000ff" text-anchor="end" style="" >1</text>
<use href="#wi" x="271" y="769" width="18" height="14"/>
<text x="298" y="781" font-size="14" fill="#0000ff" text-anchor="start" textLength="102.1" lengthAdjust="spacingAndGlyphs" style="" >SkypeBridge.exe</text>
<text x="539" y="781" font-size="14" fill="#0000ff" text-anchor="start" style="" >64-bit</text>
<text x="736" y="781" font-size="14" fill="#0000ff" text-anchor="end" textLength="58.1" lengthAdjust="spacingAndGlyphs" style="" >30,67 MB</text>
<text x="755.5" y="781" font-size="14" fill="#0000ff" text-anchor="start" textLength="135.5" lengthAdjust="spacingAndGlyphs" style="" >14/02/2019 20:15:14</text>
<g clip-path="url(#dc)">
<text x="918.5" y="781" font-size="14" fill="#0000ff" text-anchor="start" textLength="53.2" lengthAdjust="spacingAndGlyphs" style="" >SkypeBri</text>
</g>
<text x="78" y="804" font-size="14" fill="#0000ff" text-anchor="end" style="" >32728</text>
<text x="141" y="804" font-size="14" fill="#0000ff" text-anchor="end" style="" >1</text>
<use href="#wi" x="248" y="792" width="18" height="14"/>
<text x="275" y="804" font-size="14" fill="#0000ff" text-anchor="start" textLength="158.4" lengthAdjust="spacingAndGlyphs" style="" >ApplicationFrameHost.exe</text>
<text x="539" y="804" font-size="14" fill="#0000ff" text-anchor="start" style="" >64-bit</text>
<text x="736" y="804" font-size="14" fill="#0000ff" text-anchor="end" textLength="58.1" lengthAdjust="spacingAndGlyphs" style="" >12,88 MB</text>
<text x="755.5" y="804" font-size="14" fill="#0000ff" text-anchor="start" textLength="135.5" lengthAdjust="spacingAndGlyphs" style="" >15/02/2019 09:30:53</text>
<g clip-path="url(#dc)">
<text x="918.5" y="804" font-size="14" fill="#0000ff" text-anchor="start" textLength="57.7" lengthAdjust="spacingAndGlyphs" style="" >Applicatio</text>
</g>
<text x="78" y="827" font-size="14" fill="#0000ff" text-anchor="end" style="" >31804</text>
<text x="141" y="827" font-size="14" fill="#0000ff" text-anchor="end" style="" >1</text>
<use href="#wi" x="248" y="815" width="18" height="14"/>
<text x="275" y="827" font-size="14" fill="#0000ff" text-anchor="start" textLength="64.6" lengthAdjust="spacingAndGlyphs" style="" >dllhost.exe</text>
<text x="539" y="827" font-size="14" fill="#0000ff" text-anchor="start" style="" >64-bit</text>
<text x="736" y="827" font-size="14" fill="#0000ff" text-anchor="end" textLength="50.6" lengthAdjust="spacingAndGlyphs" style="" >6,50 MB</text>
<text x="755.5" y="827" font-size="14" fill="#0000ff" text-anchor="start" textLength="135.5" lengthAdjust="spacingAndGlyphs" style="" >15/02/2019 09:31:03</text>
<g clip-path="url(#dc)">
<text x="918.5" y="827" font-size="14" fill="#0000ff" text-anchor="start" textLength="55.4" lengthAdjust="spacingAndGlyphs" style="" >COM Sur</text>
</g>
<text x="78" y="850" font-size="14" fill="#0000ff" text-anchor="end" style="" >33824</text>
<text x="141" y="850" font-size="14" fill="#0000ff" text-anchor="end" style="" >1</text>
<use href="#bx" x="228" y="839" width="11" height="11"/>
<use href="#wi" x="248" y="838" width="18" height="14"/>
<text x="275" y="850" font-size="14" fill="#0000ff" text-anchor="start" textLength="114.9" lengthAdjust="spacingAndGlyphs" style="" >RuntimeBroker.exe</text>
<text x="539" y="850" font-size="14" fill="#0000ff" text-anchor="start" style="" >64-bit</text>
<text x="736" y="850" font-size="14" fill="#0000ff" text-anchor="end" textLength="50.6" lengthAdjust="spacingAndGlyphs" style="" >3,77 MB</text>
<text x="755.5" y="850" font-size="14" fill="#0000ff" text-anchor="start" textLength="135.5" lengthAdjust="spacingAndGlyphs" style="" >15/02/2019 09:31:04</text>
<g clip-path="url(#dc)">
<text x="918.5" y="850" font-size="14" fill="#0000ff" text-anchor="start" textLength="49.5" lengthAdjust="spacingAndGlyphs" style="" >Runtime</text>
</g>
</g>
<rect x="972" y="166" width="21" height="676" fill="#f0f0f0" />
<rect x="973" y="187" width="19" height="69" fill="#cdcdcd" />
<path d="M978 180 L982.5 175.5 L987 180" fill="none" stroke="#606060" stroke-width="2"/>
<path d="M978 828 L982.5 832.5 L987 828" fill="none" stroke="#606060" stroke-width="2"/>
<rect x="9" y="842" width="984" height="20" fill="#f0f0f0" />
<rect x="30" y="842" width="698" height="19" fill="#cdcdcd" />
<path d="M20 847.5 L15.5 852 L20 856.5" fill="none" stroke="#606060" stroke-width="2"/>
<path d="M958.5 847.5 L963 852 L958.5 856.5" fill="none" stroke="#606060" stroke-width="2"/>
<rect x="9" y="862" width="984" height="1" fill="#a0a0a0" />
<g transform="translate(15,874)"><rect x="0.5" y="0.5" width="35" height="27" fill="#ffffff" stroke="#7a7a7a"/><rect x="1" y="3" width="7" height="24" fill="#e8e8e8"/><rect x="1" y="1" width="34" height="2" fill="#7d7f84"/><rect x="27" y="1.5" width="1.6" height="1.2" fill="#c8c8c8"/><rect x="30" y="1.5" width="1.6" height="1.2" fill="#c8c8c8"/><rect x="33" y="1.5" width="1.6" height="1.2" fill="#c8c8c8"/><rect x="9" y="5" width="15" height="19" fill="#0a72d6"/><rect x="2" y="6" width="1" height="1" fill="#888"/><rect x="4" y="6" width="3" height="1" fill="#999"/><rect x="2" y="9" width="1" height="1" fill="#888"/><rect x="4" y="9" width="3" height="1" fill="#999"/><rect x="2" y="12" width="1" height="1" fill="#888"/><rect x="4" y="12" width="3" height="1" fill="#999"/><rect x="2" y="15" width="1" height="1" fill="#888"/><rect x="4" y="15" width="3" height="1" fill="#999"/><rect x="25" y="6" width="9" height="1" fill="#777"/><rect x="25" y="8" width="9" height="1" fill="#777"/><rect x="25" y="10" width="9" height="1" fill="#777"/><rect x="25" y="12" width="9" height="1" fill="#777"/><rect x="25" y="14" width="9" height="1" fill="#777"/><rect x="25" y="16" width="9" height="1" fill="#777"/><rect x="25" y="18" width="9" height="1" fill="#777"/><rect x="25" y="20" width="5" height="1" fill="#777"/></g>
<text x="65" y="884.5" font-size="15" fill="#000" text-anchor="start" textLength="151" lengthAdjust="spacingAndGlyphs" style="font-weight:bold;" >[System Idle Process]</text>
<rect x="8.5" y="924.5" width="91" height="29" fill="#e1e1e1" stroke="#adadad" />
<text x="23" y="944" font-size="14" fill="#000" text-anchor="start" textLength="62" lengthAdjust="spacingAndGlyphs" style="" >Terminate</text>
<rect x="107.5" y="924.5" width="90" height="29" fill="#e1e1e1" stroke="#adadad" />
<text x="129" y="944" font-size="14" fill="#000" text-anchor="start" textLength="47" lengthAdjust="spacingAndGlyphs" style="" >Monitor</text>
<rect x="204.5" y="924.5" width="91" height="29" fill="#e1e1e1" stroke="#adadad" />
<text x="222" y="944" font-size="14" fill="#000" text-anchor="start" textLength="56" lengthAdjust="spacingAndGlyphs" style="" >Windows</text>
<rect x="837.5" y="924.5" width="155" height="29" fill="#e1e1e1" stroke="#adadad" />
<text x="855.5" y="944" font-size="14" fill="#000" text-anchor="start" textLength="119.5" lengthAdjust="spacingAndGlyphs" style="" >Minimize all windows</text>
<rect x="0" y="962" width="11" height="1" fill="#d0d0d0" />
<rect x="11" y="962" width="992" height="1" fill="#200a30" />
</svg>
</body></html>
